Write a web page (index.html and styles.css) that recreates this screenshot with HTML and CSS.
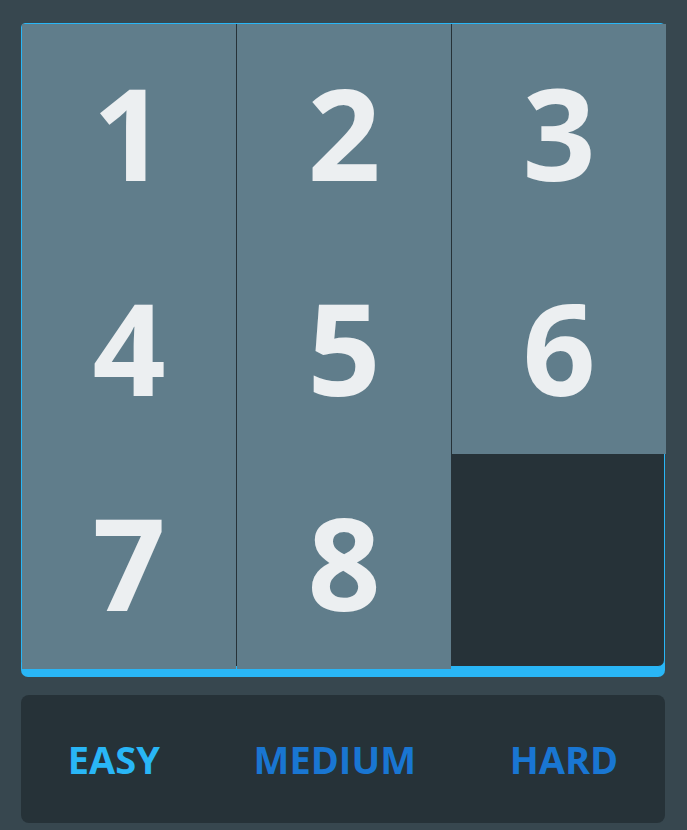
FILE: index.html
```html
<!DOCTYPE html>
<html>
<head>
<meta charset="utf-8">
<link rel="stylesheet" href="styles.css">
</head>
<body>
<div class="app">
  <div class="board">
    <div class="tile">1</div>
    <div class="tile">2</div>
    <div class="tile">3</div>
    <div class="tile">4</div>
    <div class="tile">5</div>
    <div class="tile">6</div>
    <div class="tile">7</div>
    <div class="tile">8</div>
    <div class="empty"></div>
  </div>
  <div class="levels">
    <button class="level level-active">EASY</button>
    <button class="level">MEDIUM</button>
    <button class="level">HARD</button>
  </div>
</div>
</body>
</html>
```

FILE: styles.css
```css
html, body {
  margin: 0;
  padding: 0;
  background: #37474f;
}
body {
  font-family: "Open Sans", "DejaVu Sans", sans-serif;
}
.app {
  padding: 23px 22px 0 21px;
  display: flex;
  flex-direction: column;
  gap: 28px;
}
.board {
  box-sizing: border-box;
  width: 644px;
  height: 644px;
  background: #263238;
  border: 1px solid #29b6f6;
  border-radius: 4px 4px 7px 7px;
  box-shadow: 0 10px 0 #29b6f6;
  display: grid;
  grid-template-columns: repeat(3, 214px);
  grid-template-rows: repeat(3, 215px);
  column-gap: 1px;
}
.tile {
  background: #607d8b;
  color: #eceff1;
  font-size: 128px;
  font-weight: 700;
  display: flex;
  align-items: center;
  justify-content: center;
  line-height: normal;
}
.levels {
  height: 128px;
  width: 644px;
  background: #263238;
  border-radius: 8px;
  display: flex;
  align-items: center;
  justify-content: space-around;
}
.level {
  background: none;
  border: none;
  padding: 0;
  font-family: "Open Sans", "DejaVu Sans", sans-serif;
  font-weight: 700;
  font-size: 38px;
  color: #1976d2;
  cursor: pointer;
}
.level-active {
  color: #29b6f6;
}
```
